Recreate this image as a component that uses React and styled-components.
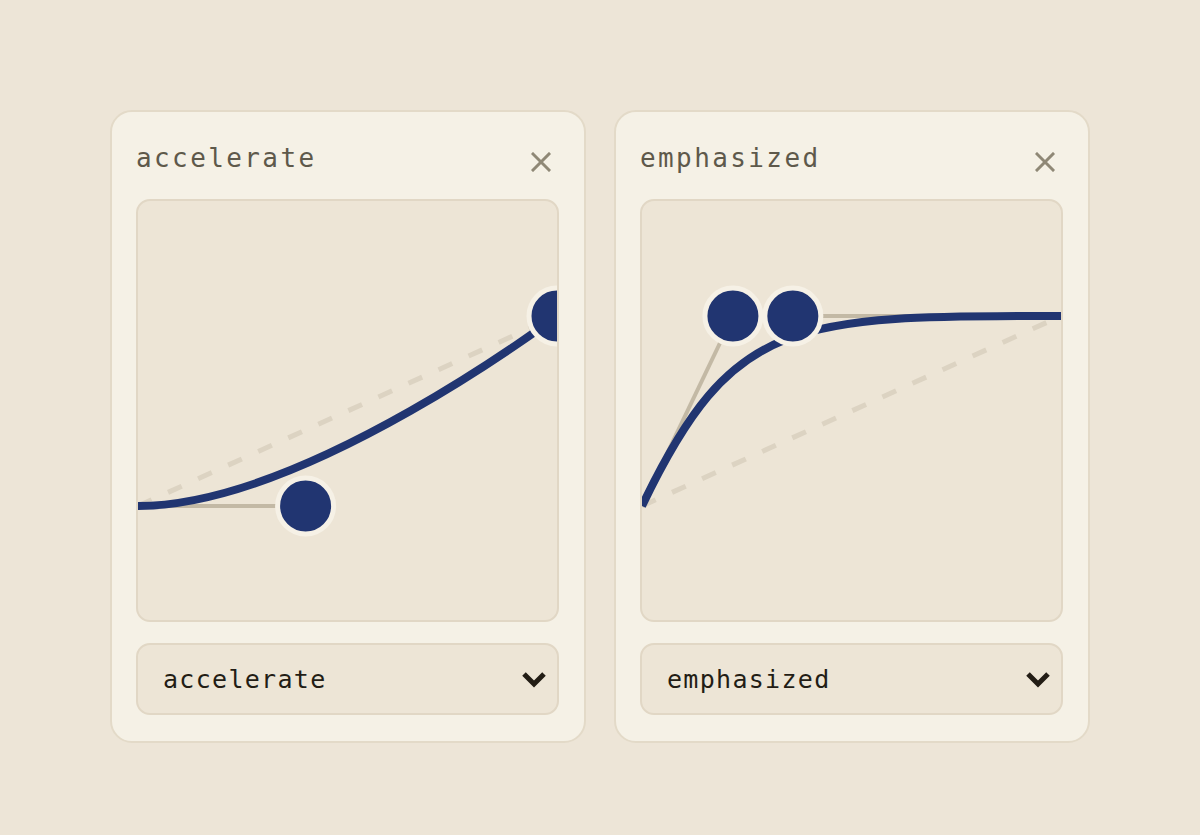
import React from 'react'
import styled, { createGlobalStyle } from 'styled-components'

const GlobalStyle = createGlobalStyle`
  html, body {
    margin: 0;
    padding: 0;
    background: #ede5d7;
  }
  body {
    font-family: "DejaVu Sans Mono", "Liberation Mono", monospace;
  }
`

// plot area inside the chart box: x 0..1 -> 0..W, y 0..1 -> Y0..Y1
const W = 419
const Y0 = 305
const Y1 = 115

const px = (x) => x * W
const py = (y) => Y0 - y * (Y0 - Y1)

const curves = [
  { name: 'accelerate', p: [0.4, 0, 1, 1] },
  { name: 'emphasized', p: [0.217, 1, 0.36, 1] },
]

const CurvePlot = ({ p }) => {
  const [x1, y1, x2, y2] = p
  const a = [px(0), py(0)]
  const b = [px(x1), py(y1)]
  const c = [px(x2), py(y2)]
  const d = [px(1), py(1)]
  return (
    <Plot viewBox={`0 0 ${W} ${W}`} width={W} height={W}>
      <line x1={a[0]} y1={a[1]} x2={d[0]} y2={d[1]} stroke="#dcd3c2" strokeWidth="5" strokeDasharray="15 18" />
      <line x1={a[0]} y1={a[1]} x2={b[0]} y2={b[1]} stroke="#c3b9a5" strokeWidth="4" />
      <line x1={d[0]} y1={d[1]} x2={c[0]} y2={c[1]} stroke="#c3b9a5" strokeWidth="4" />
      <path
        d={`M${a[0]} ${a[1]} C${b[0]} ${b[1]} ${c[0]} ${c[1]} ${d[0]} ${d[1]}`}
        fill="none"
        stroke="#213571"
        strokeWidth="8"
      />
      <circle cx={b[0]} cy={b[1]} r="28" fill="#213571" stroke="#f6f1e6" strokeWidth="5" />
      <circle cx={c[0]} cy={c[1]} r="28" fill="#213571" stroke="#f6f1e6" strokeWidth="5" />
    </Plot>
  )
}

const CurveCard = ({ name, p }) => (
  <Card>
    <Header>
      <Title>{name}</Title>
      <Close aria-label="close">
        <svg width="20" height="20" viewBox="0 0 20 20">
          <path d="M2 2 L18 18 M18 2 L2 18" stroke="#8f8876" strokeWidth="3" strokeLinecap="square" />
        </svg>
      </Close>
    </Header>
    <Chart>
      <CurvePlot p={p} />
    </Chart>
    <Select>
      <SelectLabel>{name}</SelectLabel>
      <svg width="26" height="17" viewBox="0 0 26 17">
        <path d="M3 3 L13 13 L23 3" fill="none" stroke="#231d15" strokeWidth="5" strokeLinejoin="miter" />
      </svg>
    </Select>
  </Card>
)

const App = () => (
  <>
    <GlobalStyle />
    <Page>
      {curves.map((c) => (
        <CurveCard key={c.name} name={c.name} p={c.p} />
      ))}
    </Page>
  </>
)

export default App

const Page = styled.div`
  min-height: 835px;
  box-sizing: border-box;
  padding-top: 110px;
  display: flex;
  justify-content: center;
  align-items: flex-start;
  gap: 28px;
`

const Card = styled.div`
  width: 476px;
  box-sizing: border-box;
  background: #f5f1e6;
  border: 2px solid #e3dac8;
  border-radius: 22px;
  padding: 22px 25px 26px 24px;
  display: flex;
  flex-direction: column;
`

const Header = styled.div`
  height: 48px;
  display: flex;
  align-items: center;
  justify-content: space-between;
  margin-bottom: 17px;
`

const Title = styled.h2`
  margin: 0;
  font-family: "DejaVu Sans Mono", "Liberation Mono", monospace;
  font-weight: normal;
  font-size: 26px;
  letter-spacing: 2.4px;
  color: #5e594b;
`

const Close = styled.button`
  width: 36px;
  height: 36px;
  margin-top: 8px;
  padding: 0;
  border: none;
  background: transparent;
  display: flex;
  align-items: center;
  justify-content: center;
  cursor: pointer;
`

const Chart = styled.div`
  width: 423px;
  height: 423px;
  box-sizing: border-box;
  border: 2px solid #e1d7c5;
  border-radius: 14px;
  background: #ede5d6;
  overflow: hidden;
`

const Plot = styled.svg`
  display: block;
  overflow: hidden;
`

const Select = styled.div`
  margin-top: 21px;
  height: 72px;
  box-sizing: border-box;
  border: 2px solid #e1d7c5;
  border-radius: 14px;
  background: #ede5d6;
  padding: 0 10px 0 25px;
  display: flex;
  align-items: center;
  justify-content: space-between;
`

const SelectLabel = styled.span`
  font-family: "DejaVu Sans Mono", "Liberation Mono", monospace;
  font-size: 25px;
  letter-spacing: 1.3px;
  color: #231d15;
`
